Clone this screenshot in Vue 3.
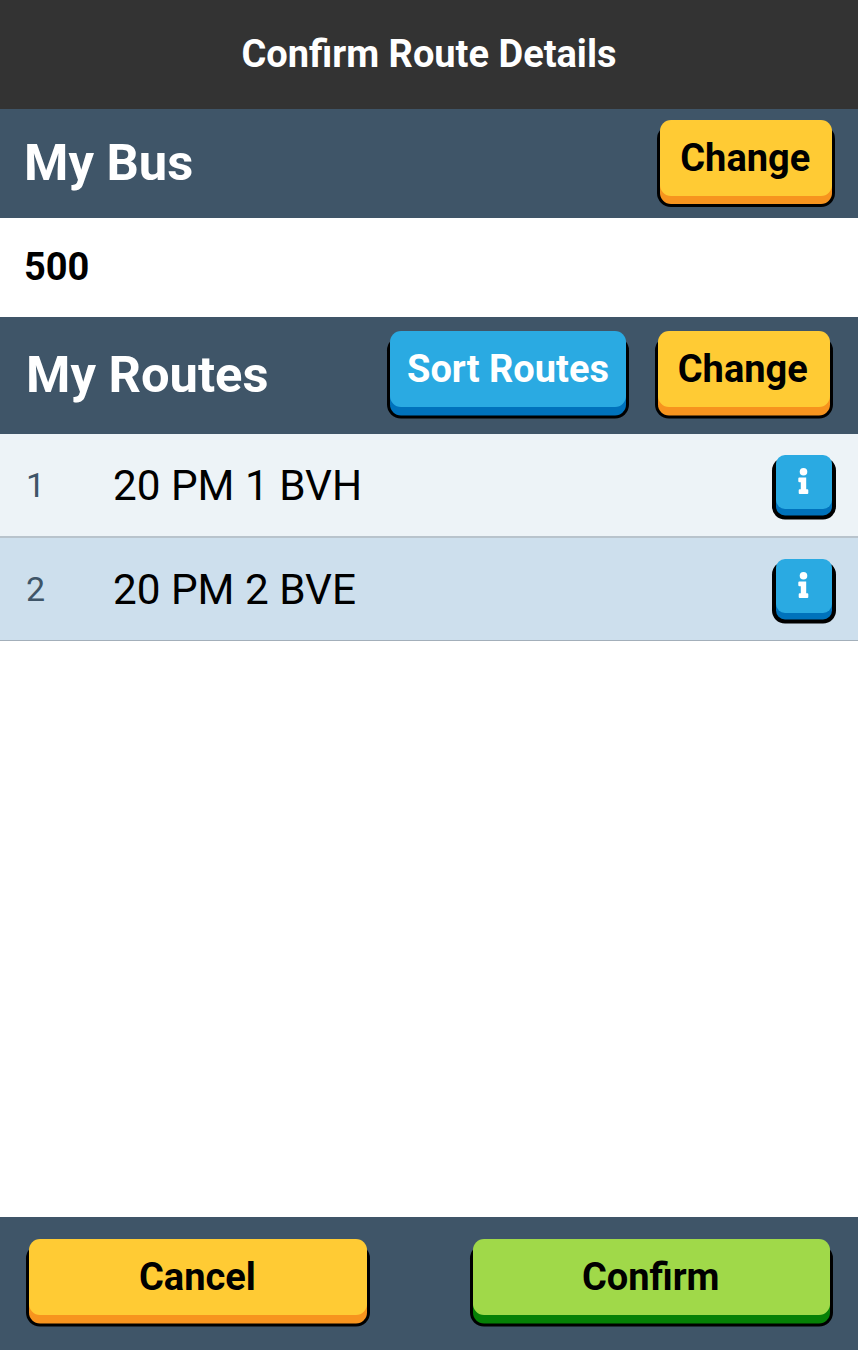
<script setup>
const routes = [
  { id: 1, name: '20 PM 1 BVH' },
  { id: 2, name: '20 PM 2 BVE' },
]
</script>

<template>
  <main class="screen">
    <header class="title">Confirm Route Details</header>

    <section class="band bus-band">
      <h2>My Bus</h2>
      <button class="btn yellow change">Change</button>
    </section>
    <div class="bus-number">500</div>

    <section class="band routes-band">
      <h2>My Routes</h2>
      <button class="btn blue sort">Sort Routes</button>
      <button class="btn yellow change">Change</button>
    </section>

    <ul class="routes">
      <li v-for="route in routes" :key="route.id">
        <span class="index">{{ route.id }}</span>
        <span class="name">{{ route.name }}</span>
        <button class="info" aria-label="Route info">
          <svg width="11" height="27" viewBox="0 0 11 27">
            <circle cx="5.5" cy="3.8" r="3.8" />
            <path d="M1.2 9.5H8.2V21.3H9.3Q10.3 21.3 10.3 22.3V25Q10.3 26 9.3 26H1.7Q.7 26 .7 25V22.3Q.7 21.3 1.7 21.3H2.8V14.2H1.5Q.3 14.2 .3 13.2V10.5Q.3 9.5 1.3 9.5Z" />
          </svg>
        </button>
      </li>
    </ul>

    <footer class="footer">
      <button class="btn yellow cancel">Cancel</button>
      <button class="btn green confirm">Confirm</button>
    </footer>
  </main>
</template>

<style>
body {
  margin: 0;
  background: #fff;
}
</style>

<style scoped>
.screen {
  display: flex;
  flex-direction: column;
  width: 858px;
  height: 1350px;
  overflow: hidden;
  background: #fff;
  color: #000;
  font-family: Roboto, "Liberation Sans", sans-serif;
}
.title {
  flex: none;
  height: 109px;
  line-height: 109px;
  background: #333;
  color: #fff;
  font-size: 38px;
  font-weight: 700;
  text-align: center;
}
.band {
  flex: none;
  display: flex;
  align-items: flex-start;
  box-sizing: border-box;
  background: #3f5568;
}
h2 {
  margin: 0 auto 0 0;
  color: #fff;
  font-size: 50.7px;
  font-weight: 700;
  line-height: 107px;
}
.bus-band {
  height: 109px;
  padding: 0 26px 0 24px;
}
.bus-band .btn {
  margin-top: 11px;
  box-shadow: 0 8px 0 #f7941e, 0 8px 0 3px #000;
}
.routes-band {
  height: 117.5px;
  padding: 0 28.5px 0 26px;
}
.routes-band h2 {
  line-height: 115px;
}
.routes-band .btn {
  margin-top: 14.5px;
}
.bus-number {
  flex: none;
  height: 98.5px;
  padding-left: 24px;
  line-height: 99px;
  font-size: 38px;
  font-weight: 700;
}
.btn {
  box-sizing: border-box;
  height: 76px;
  padding: 0;
  border: 0;
  border-radius: 11px;
  color: #000;
  font-family: inherit;
  font-size: 38px;
  font-weight: 700;
  line-height: 76px;
}
.yellow {
  background: #ffcb34;
  box-shadow: 0 8.5px 0 #f7941e, 0 8.5px 0 3px #000;
}
.blue {
  background: #2aaae2;
  color: #fff;
  box-shadow: 0 8.5px 0 #0072bc, 0 8.5px 0 3px #000;
}
.green {
  background: #a0d949;
  box-shadow: 0 8.5px 0 #068006, 0 8.5px 0 3px #000;
}
.change {
  width: 172px;
  padding-right: 1.5px;
}
.sort {
  width: 236px;
  margin-right: 31.5px;
}
.routes {
  margin: 0;
  padding: 0;
  list-style: none;
}
li {
  display: flex;
  align-items: center;
  box-sizing: border-box;
  height: 104px;
  padding: 0 26px 0 26px;
  border-bottom: 2px solid #b8c3cc;
  background: #edf3f7;
}
li:nth-child(even) {
  height: 103px;
  border-bottom: 1px solid #a3afba;
  background: #cddfed;
}
.index {
  width: 87px;
  color: #3f5568;
  font-size: 34px;
}
.name {
  flex: 1;
  font-size: 42.25px;
}
.info {
  display: flex;
  justify-content: center;
  align-items: flex-start;
  width: 56.5px;
  height: 54px;
  margin-bottom: 6px;
  padding: 12.5px 1px 0 0;
  border: 0;
  border-radius: 9px;
  background: #2aaae2;
  box-shadow: 0 6.5px 0 #0072bc, 0 6.5px 0 4px #000;
}
.info svg {
  fill: #fff;
}
.footer {
  flex: none;
  display: flex;
  justify-content: space-between;
  box-sizing: border-box;
  height: 133.5px;
  margin-top: auto;
  padding: 22.8px 28.4px 0 28.6px;
  background: #3f5568;
}
.cancel {
  width: 338.6px;
  padding-right: 1px;
}
.confirm {
  width: 356.8px;
  padding-right: 1px;
}
</style>
